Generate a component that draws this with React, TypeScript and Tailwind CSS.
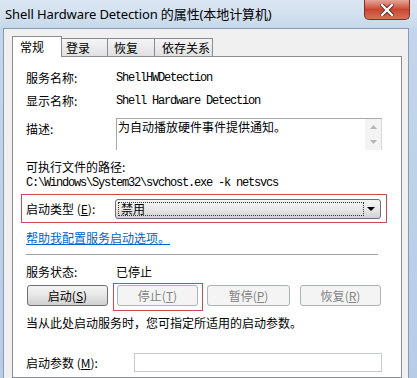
import React from "react";

const cjk = "font-['Noto_Sans_CJK_SC',sans-serif]";
const mono = "font-['Liberation_Mono','Noto_Sans_CJK_SC',monospace] tracking-[-1.2px]";

function Btn({ label, k, enabled, className }: { label: string; k: string; enabled?: boolean; className?: string }) {
  return (
    <div
      className={
        enabled
          ? "h-[21px] w-[81px] shrink-0 rounded-[3px] border border-[#707070] bg-linear-to-b from-[#f4f4f4] via-[#e6e6e6] to-[#cfcfcf] flex items-center justify-center text-black " + (className ?? "")
          : "h-[21px] w-[81px] shrink-0 rounded-[3px] border border-[#adb2b5] bg-[#f4f4f4] flex items-center justify-center text-[#838383] " + (className ?? "")
      }
    >
      <span className="leading-[14px]">
        {label}(<span className="underline">{k}</span>)
      </span>
    </div>
  );
}

export default function App() {
  return (
    <div className={"relative w-[417px] h-[378px] overflow-hidden bg-linear-to-b from-[#c4d7ec] to-[#b7cde6] flex flex-col text-[12px] text-black " + cjk}>
      {/* title bar */}
      <div className="h-[28px] shrink-0 flex items-center pl-[5px] bg-linear-to-b from-[#d9e5f2] via-[#d3e1f0] to-[#c6d8eb]">
        <span className="font-['Noto_Sans','Noto_Sans_CJK_SC',sans-serif] text-[13px] leading-[16px] text-black tracking-[-0.1px]">
          Shell Hardware Detection 的属性(本地计算机)
        </span>
      </div>
      {/* close button */}
      <div className="absolute top-0 right-[7px] w-[46px] h-[20px] rounded-b-[5px] border border-t-0 border-[#7a3128] bg-linear-to-b from-[#e2a598] via-[#c9472f] to-[#d8705a] flex items-center justify-center">
        <svg width="14" height="12" viewBox="0 0 14 12">
          <path d="M2 1 L12 11 M12 1 L2 11" stroke="#5a2018" strokeWidth="4" strokeLinecap="square" />
          <path d="M2 1 L12 11 M12 1 L2 11" stroke="#ffffff" strokeWidth="2.4" strokeLinecap="square" />
        </svg>
      </div>

      {/* dialog body */}
      <div className="flex-1 ml-[3px] mr-[8px] bg-[#f0f0f0] border-t border-l border-r border-[#8a9bb0] pl-[8px] pr-[6px] pt-[7px] flex flex-col">
        {/* tabs */}
        <div className="h-[20px] shrink-0 flex items-start">
          <div className="relative z-10 h-[21px] w-[50px] bg-white border border-b-0 border-[#898c95] pl-[7px] pt-[2px] leading-[16px]">
            常规
          </div>
          <div className="mt-[2px] h-[18px] w-[46px] border border-l-0 border-b-0 border-[#898c95] bg-linear-to-b from-[#f5f5f5] to-[#e1e1e1] pl-[4px] pt-[1px] leading-[16px]">
            登录
          </div>
          <div className="mt-[2px] h-[18px] w-[47px] border border-l-0 border-b-0 border-[#898c95] bg-linear-to-b from-[#f5f5f5] to-[#e1e1e1] pl-[6px] pt-[1px] leading-[16px]">
            恢复
          </div>
          <div className="mt-[2px] h-[18px] w-[58px] border border-l-0 border-b-0 border-[#898c95] bg-linear-to-b from-[#f5f5f5] to-[#e1e1e1] pl-[7px] pt-[1px] leading-[16px]">
            依存关系
          </div>
        </div>

        {/* panel */}
        <div className="flex-1 bg-white border border-[#898c95] pl-[13px] pt-[13px] flex flex-col leading-[16px]">
          <div className="flex h-[16px]">
            <div className="w-[90px] shrink-0">服务名称:</div>
            <div className={mono}>ShellHWDetection</div>
          </div>
          <div className="flex h-[16px] mt-[7px]">
            <div className="w-[90px] shrink-0">显示名称:</div>
            <div className={mono}>Shell Hardware Detection</div>
          </div>
          <div className="flex mt-[9px]">
            <div className="w-[90px] shrink-0 pt-[3px]">描述:</div>
            <div className="w-[266px] h-[32px] flex border-t border-l border-r border-[#a8a8a8] border-r-[#d8d8d8] bg-white">
              <div className="flex-1 pl-[1px] pt-[1px] leading-[14px]">为自动播放硬件事件提供通知。</div>
              <div className="w-[16px] flex flex-col items-center justify-between py-[6px] bg-[#f3f3f3]">
                <svg width="7" height="4" viewBox="0 0 7 4"><path d="M0 4 L3.5 0 L7 4 Z" fill="#b5b5b5" /></svg>
                <svg width="7" height="4" viewBox="0 0 7 4"><path d="M0 0 L3.5 4 L7 0 Z" fill="#b5b5b5" /></svg>
              </div>
            </div>
          </div>
          <div className="mt-[9px] h-[16px]">可执行文件的路径:</div>
          <div className={"h-[16px] " + mono}>C:\Windows\System32\svchost.exe -k netsvcs</div>

          {/* startup type with red box */}
          <div className="mt-[3px] -ml-[5px] w-[366px] h-[29px] border border-[#c84a55] flex items-center">
            <div className="w-[93px] shrink-0 pl-[4px]">
              启动类型 (<span className="underline">E</span>):
            </div>
            <div className="relative w-[266px] h-[20px] rounded-[3px] border border-[#707070] bg-linear-to-b from-[#f4f4f4] via-[#e8e8e8] to-[#d2d2d2] flex items-center">
              <div className="ml-[2px] w-[246px] h-[14px] border border-dotted border-[#333] flex items-center pl-[2px] leading-[14px]">
                禁用
              </div>
              <svg className="absolute right-[5px] top-[7px]" width="8" height="4" viewBox="0 0 8 4">
                <path d="M0 0 L8 0 L4 4 Z" fill="#000" />
              </svg>
            </div>
          </div>

          <div className="mt-[7px] h-[16px]">
            <span className="text-[#0066cc] underline">帮助我配置服务启动选项。</span>
          </div>
          <div className="mt-[8px] h-px w-[352px] bg-[#a0a0a0]" />

          <div className="flex h-[16px] mt-[9px]">
            <div className="w-[90px] shrink-0">服务状态:</div>
            <div>已停止</div>
          </div>

          <div className="flex mt-[5px]">
            <Btn label="启动" k="S" enabled className="ml-[1px]" />
            <div className="relative ml-[9px]">
              <Btn label="停止" k="T" />
              <div className="absolute -left-[4px] -top-[2px] w-[90px] h-[28px] border border-[#c84a55]" />
            </div>
            <Btn label="暂停" k="P" className="ml-[9px] w-[83px]" />
            <Btn label="恢复" k="R" className="ml-[10px]" />
          </div>

          <div className="mt-[9px] h-[16px]">当从此处启动服务时，您可指定所适用的启动参数。</div>

          <div className="flex mt-[22px]">
            <div className="w-[108px] shrink-0 pt-[2px]">
              启动参数 (<span className="underline">M</span>):
            </div>
            <div className="w-[248px] h-[19px] border border-[#c6c9cf] bg-white" />
          </div>
        </div>
      </div>
    </div>
  );
}
